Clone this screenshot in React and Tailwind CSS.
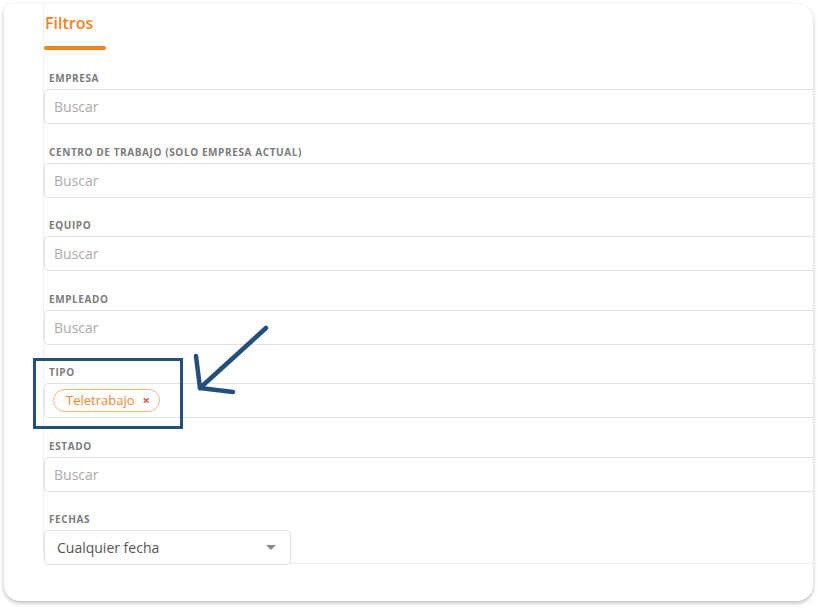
import React from 'react';

const campos = [
  { label: 'Empresa' },
  { label: 'Centro de trabajo (solo empresa actual)' },
  { label: 'Equipo' },
  { label: 'Empleado' },
  { label: 'Tipo', chip: 'Teletrabajo' },
  { label: 'Estado' },
];

const Campo = ({ label, chip }) => (
  <div className="flex flex-col">
    <label className="text-[10px] leading-[14px] font-bold text-[#7b7b7b] uppercase tracking-[0.6px] ml-[5px] mb-1">
      {label}
    </label>
    <div className="h-[35px] w-[900px] border border-[#e2e2e2] rounded-[4px] bg-white flex items-center">
      {chip ? (
        <span className="ml-2 h-[23px] pl-3 pr-[9px] rounded-full border border-[#f7b37a] text-[#f0862a] text-[13px] flex items-center gap-[8px]">
          {chip}
          <span className="text-[#e5534b] text-[13px] font-bold leading-none">×</span>
        </span>
      ) : (
        <span className="ml-[9px] text-[14px] text-[#ababab]">Buscar</span>
      )}
    </div>
  </div>
);

export default function App() {
  return (
    <div className="w-[818px] h-[608px] bg-white pt-1 pl-1" style={{ fontFamily: '"Open Sans", "Noto Sans", sans-serif' }}>
      <div className="relative w-[809px] h-[597px] bg-white rounded-[16px] rounded-tl-[8px] overflow-hidden shadow-[0_2px_4px_rgba(0,0,0,0.26)]">
        <div className="ml-[39px] h-[560px] w-[900px] border-l border-b border-[#efefef] rounded-bl-[8px] pt-[7px]">
          <h2 className="text-[16px] leading-6 font-semibold text-[#f5821f] ml-[1px]">Filtros</h2>
          <div className="mt-[11px] h-1 w-[62px] rounded-full bg-[#f5821f]" />

          <div className="mt-[21px] flex flex-col gap-[20.5px]">
            {campos.map((c) => (
              <Campo key={c.label} {...c} />
            ))}
            <div className="flex flex-col">
              <label className="text-[10px] leading-[14px] font-bold text-[#7b7b7b] uppercase tracking-[0.6px] ml-[5px] mb-1">
                Fechas
              </label>
              <div className="h-[35px] w-[247px] border border-[#e2e2e2] rounded-[4px] bg-white flex items-center justify-between pl-3 pr-[14px]">
                <span className="text-[14px] text-[#555]">Cualquier fecha</span>
                <span className="w-0 h-0 border-l-[5px] border-r-[5px] border-t-[5px] border-l-transparent border-r-transparent border-t-[#8a8a8a]" />
              </div>
            </div>
          </div>
        </div>
      </div>

      {/* anotacion */}
      <div className="absolute left-[33px] top-[358px] w-[150px] h-[71px] border-[3px] border-[#22507a]" />
      <svg className="absolute left-0 top-0 pointer-events-none" width="818" height="608">
        <g stroke="#22507a" strokeWidth="4.5" strokeLinecap="round" strokeLinejoin="round" fill="none">
          <line x1="266" y1="328" x2="200" y2="388" />
          <polyline points="196,356 200,388 233,392" />
        </g>
      </svg>
    </div>
  );
}
